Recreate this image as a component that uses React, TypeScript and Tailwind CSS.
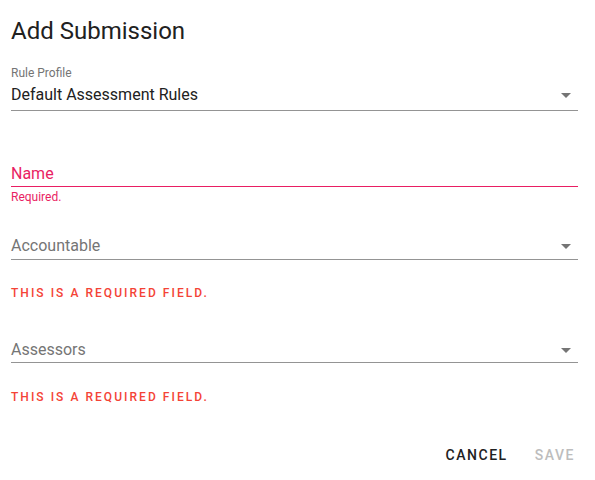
const font = { fontFamily: 'Roboto, "Liberation Sans", sans-serif' };

function Arrow() {
  return (
    <svg width="10" height="5" viewBox="0 0 10 5" className="mr-[7px]">
      <path d="M0 0h10L5 5z" fill="#757575" />
    </svg>
  );
}

function FieldError() {
  return (
    <div className="text-[12px] leading-[16px] font-medium tracking-[0.17em] text-[#f44336]">
      THIS IS A REQUIRED FIELD.
    </div>
  );
}

export default function App() {
  return (
    <div style={font} className="w-[595px] h-[480px] bg-white pl-[11px] pr-[17px] overflow-hidden">
      <h2 className="mt-[15px] h-[32px] text-[24px] leading-[32px] font-normal text-[#212121]">Add Submission</h2>

      <div className="mt-[18px] text-[12px] leading-[16px] text-[#757575]">Rule Profile</div>
      <div className="mt-[2px] h-[28px] pt-[2px] flex items-start justify-between border-b border-[#949494]">
        <span className="text-[16px] leading-[20px] text-[#212121]">Default Assessment Rules</span>
        <span className="mt-[8px]"><Arrow /></span>
      </div>

      <div className="mt-[51px] h-[25px] pt-[2px] border-b border-[#e91e63] text-[16px] leading-[20px] text-[#e91e63]">
        Name
      </div>
      <div className="mt-[2px] text-[12px] leading-[16px] text-[#e91e63]">Required.</div>

      <div className="mt-[29px] h-[26px] pt-[2px] flex items-start justify-between border-b border-[#949494]">
        <span className="text-[16px] leading-[20px] text-[#757575]">Accountable</span>
        <span className="mt-[8px]"><Arrow /></span>
      </div>
      <div className="mt-[25px]">
        <FieldError />
      </div>

      <div className="mt-[37px] h-[25px] pt-[2px] flex items-start justify-between border-b border-[#949494]">
        <span className="text-[16px] leading-[20px] text-[#757575]">Assessors</span>
        <span className="mt-[8px]"><Arrow /></span>
      </div>
      <div className="mt-[26px]">
        <FieldError />
      </div>

      <div className="mt-[32px] h-[36px] flex items-center justify-end gap-[27px] pr-[3px] text-[14px] font-medium tracking-[0.11em]">
        <button className="text-[#212121]">CANCEL</button>
        <button className="text-[#bdbdbd]" disabled>SAVE</button>
      </div>
    </div>
  );
}
